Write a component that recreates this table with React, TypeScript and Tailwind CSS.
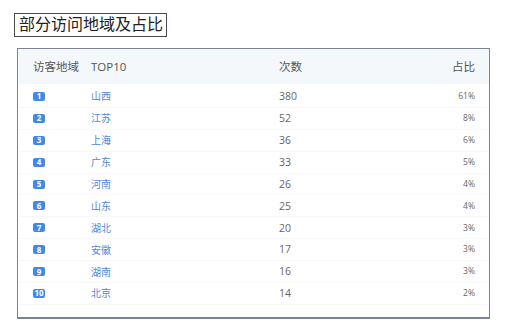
import React from 'react'

const rows = [
  { name: '山西', count: 380, pct: '61%' },
  { name: '江苏', count: 52, pct: '8%' },
  { name: '上海', count: 36, pct: '6%' },
  { name: '广东', count: 33, pct: '5%' },
  { name: '河南', count: 26, pct: '4%' },
  { name: '山东', count: 25, pct: '4%' },
  { name: '湖北', count: 20, pct: '3%' },
  { name: '安徽', count: 17, pct: '3%' },
  { name: '湖南', count: 16, pct: '3%' },
  { name: '北京', count: 14, pct: '2%' },
]

export default function App() {
  return (
    <div className="w-[512px] h-[334px] bg-white overflow-hidden font-['Open_Sans','Noto_Sans_CJK_SC',sans-serif]">
      {/* Title */}
      <div className="pt-[12px] pl-[14px]">
        <div className="inline-flex items-center h-[24px] w-[153px] border border-[#4a4a4a] pl-[4px] text-[16px] leading-none text-[#222] font-['Liberation_Serif','Noto_Sans_CJK_SC',serif]">
          部分访问地域及占比
        </div>
      </div>

      {/* Card */}
      <div className="ml-[17px] mt-[11px] w-[473px] h-[271px] border border-b-2 border-[#7b8496] bg-white">
        <div className="grid grid-cols-[58px_188px_1fr_auto] items-center h-[35px] pl-[15px] pr-[14px] bg-[#f5f8fa] text-[11.5px] text-[#555]">
          <span>访客地域</span>
          <span>TOP10</span>
          <span>次数</span>
          <span>占比</span>
        </div>
        <div className="pt-[2px]">
          {rows.map((r, i) => (
            <div
              key={r.name}
              className="grid grid-cols-[58px_188px_1fr_auto] items-center h-[21.9px] pl-[15px] pr-[14px] border-b border-[#f8f8f8]"
            >
              <span className="flex">
                <span className="inline-flex items-center justify-center h-[9px] min-w-[12px] px-[1px] rounded-[2px] bg-[#4189e8] text-white text-[8px] font-bold leading-none">
                  {i + 1}
                </span>
              </span>
              <span className="text-[10px] leading-none text-[#5585d8]">{r.name}</span>
              <span className="text-[10.5px] leading-none text-[#666]">{r.count}</span>
              <span className="text-[8.5px] leading-none text-[#666] text-right">{r.pct}</span>
            </div>
          ))}
        </div>
      </div>
    </div>
  )
}
